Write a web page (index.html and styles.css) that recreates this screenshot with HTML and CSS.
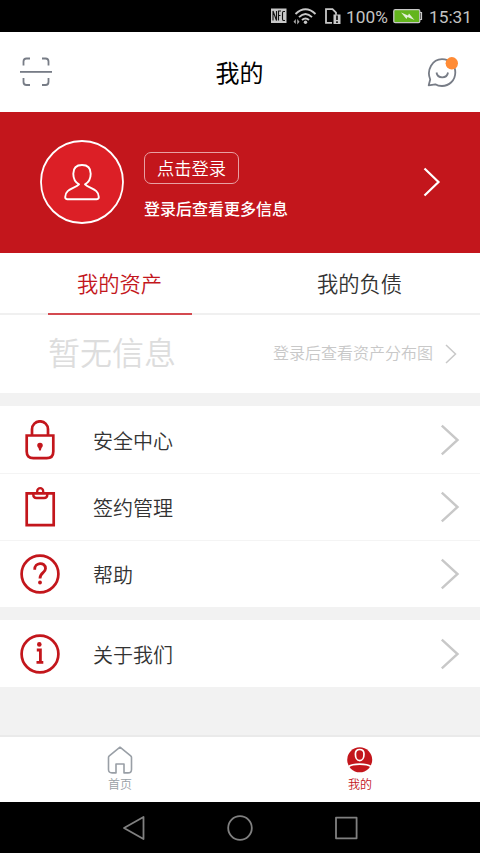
FILE: index.html
```html
<!DOCTYPE html>
<html lang="zh-CN">
<head>
<meta charset="utf-8">
<title>我的</title>
<link rel="stylesheet" href="styles.css">
</head>
<body>
<div class="phone">
  <div class="status">
    <svg class="status-icons" width="75" height="32" viewBox="0 0 75 32">
      <rect x="1" y="8.500" width="15.500" height="14.500" fill="#c8c8c8"/>
      <path d="M3 20.500V11L6.500 20.500V11M8.500 20.500V11h2.500M8.500 15.500h2M15 11.500h-1.500q-1 0-1 1.500v6q0 1.500 1 1.500H15" fill="none" stroke="#111" stroke-width="1.100"/>
      <path d="M25.500 14Q35.500 4.500 45.500 14M29 17.200Q35.500 10.700 42 17.200M32 20Q35.500 16.800 39 20" fill="none" stroke="#c8c8c8" stroke-width="1.900"/>
      <circle cx="35.500" cy="22.300" r="1.700" fill="#c8c8c8"/>
      <path d="M23.500 21.800l2.300-2.800v5zM29.500 21.800l-2.300-2.800v5.500z" fill="#aaa"/>
      <path d="M62 22.800h-6V9.200H62.500l3.500 3.500v2" fill="none" stroke="#c8c8c8" stroke-width="1.800"/>
      <path d="M63.500 14.500H70.500V24H63.500z" fill="#c8c8c8"/>
      <path d="M67 15.500v4.500M67 21.300v1.700" stroke="#111" stroke-width="1.700"/>
    </svg>
    <span class="percent">100%</span>
    <svg class="battery" width="30" height="32" viewBox="0 0 30 32">
      <rect x=".8" y="9.700" width="26" height="13" rx="1.500" fill="#63b51d" stroke="#c8c8c8" stroke-width="1.300"/>
      <path d="M27 12.500h1.500v7H27" fill="none" stroke="#c8c8c8" stroke-width="1.200"/>
      <path d="M8 12.500l7 3 1-2 5.500 6.500-7-3-1 2z" fill="#e4efd8"/>
    </svg>
    <span class="clock">15:31</span>
  </div>

  <header class="header">
    <svg width="32" height="30" viewBox="0 0 32 30" class="scan">
      <path d="M3.500 8.500V4.500Q3.500 1.500 6.500 1.500H10M22 1.500h3.500q3 0 3 3v4M3.500 21v4q0 3 3 3H10M22 28h3.500q3 0 3-3v-4" />
      <path d="M0 14.900h32"/>
    </svg>
    <h1>我的</h1>
    <svg width="32" height="32" viewBox="0 0 32 32" class="chat">
      <path d="M1.700 29.300L3.200 23.500C-.8 14 5.500 3.200 15 3.200C23 3.200 28.300 9.300 28.300 16.500C28.300 24.500 22 30 15 30Q11 30 8.300 28.300Z"/>
      <path d="M9.500 16.500c1 6.500 10.500 6.500 11.500 0"/>
      <circle cx="24.800" cy="7.300" r="6.200"/>
    </svg>
  </header>

  <section class="banner">
    <svg class="avatar" width="84" height="84" viewBox="0 0 84 84">
      <circle cx="42" cy="42" r="41" fill="#dc1f26" stroke="#fff" stroke-width="1.800"/>
      <path d="M39 44.300C34.800 42 33.300 38 33.300 33.700C33.300 28 36.500 25 42 25S50.700 28 50.700 33.700C50.700 38 49.200 42 45 44.300C49 48.800 58.800 48.500 58.800 57Q58.800 59.200 56.600 59.200H27.400Q25.200 59.200 25.200 57C25.200 48.500 35 48.800 39 44.300Z" fill="none" stroke="#fff" stroke-width="1.900" stroke-linejoin="round"/>
    </svg>
    <div class="login">
      <span class="login-button">点击登录</span>
      <span class="login-hint">登录后查看更多信息</span>
    </div>
    <svg class="banner-arrow" width="18" height="30" viewBox="0 0 18 30"><path d="M1.500 1.500L15.500 15 1.500 28.500"/></svg>
  </section>

  <nav class="tabs">
    <div class="tab"><span class="tab-label active">我的资产</span></div>
    <div class="tab"><span class="tab-label">我的负债</span></div>
  </nav>
  <section class="assets">
    <span class="empty">暂无信息</span>
    <span class="chart-hint">登录后查看资产分布图</span>
    <svg class="small-arrow" width="12" height="20" viewBox="0 0 12 20"><path d="M1 1L10.500 10 1 19"/></svg>
  </section>

  <ul class="list">
    <li>
      <svg class="icon" width="40" height="40" viewBox="0 0 40 40">
        <path d="M6.700 15.500H33.300V31.500Q33.300 38.200 26.700 38.200H13.300Q6.700 38.200 6.700 31.500ZM12 15V9.300a8 8 0 0 1 16 0V15" stroke-width="2.700"/>
        <path d="M20 22.700a2.800 2.800 0 0 1 2.800 2.900q0 1.400-1.300 2.300L20.800 30.500h-1.600l-.7-2.600q-1.300-.9-1.300-2.300A2.800 2.800 0 0 1 20 22.700Z" class="solid"/>
      </svg>
      <span>安全中心</span>
      <svg class="arrow" width="20" height="34" viewBox="0 0 20 34"><path d="M1.800 2.700L17.500 17 1.800 31.300"/></svg>
    </li>
    <li>
      <svg class="icon" width="40" height="40" viewBox="0 0 40 40">
        <path d="M6.700 6.300H33.700V38.200H6.700Z" stroke-width="2.700"/>
        <path d="M13.300 6.300V7.800q0 3.200 3.200 3.200h7.600q3.200 0 3.200-3.200V6.300" stroke-width="2.400"/>
        <path d="M17.200 6V4.200a3 3 0 0 1 6 0V6" stroke-width="2.300"/>
      </svg>
      <span>签约管理</span>
      <svg class="arrow" width="20" height="34" viewBox="0 0 20 34"><path d="M1.800 2.700L17.500 17 1.800 31.300"/></svg>
    </li>
    <li>
      <svg class="icon" width="40" height="40" viewBox="0 0 40 40">
        <circle cx="20" cy="20" r="18.400" stroke-width="2.700"/>
        <path d="M14.700 15.800C14.300 7.800 25.500 7.600 25.500 14.500C25.500 19 20 18.500 20 24.500" stroke-width="2.800"/>
        <circle cx="20" cy="28.500" r="1.900" class="solid"/>
      </svg>
      <span>帮助</span>
      <svg class="arrow" width="20" height="34" viewBox="0 0 20 34"><path d="M1.800 2.700L17.500 17 1.800 31.300"/></svg>
    </li>
  </ul>
  <ul class="list about">
    <li>
      <svg class="icon" width="40" height="40" viewBox="0 0 40 40">
        <circle cx="20" cy="20" r="18.400" stroke-width="2.700"/>
        <path d="M16.800 16H20.400V28.300M16.500 28.300H23.300" stroke-width="2.800"/>
        <circle cx="19.300" cy="10.400" r="2.300" class="solid"/>
      </svg>
      <span>关于我们</span>
      <svg class="arrow" width="20" height="34" viewBox="0 0 20 34"><path d="M1.800 2.700L17.500 17 1.800 31.300"/></svg>
    </li>
  </ul>

  <footer class="tabbar">
    <div class="item">
      <svg width="26" height="28" viewBox="0 0 26 28"><path d="M13 1.200L23.700 9.800Q24.500 10.500 24.500 11.500V23.500Q24.500 26.900 21 26.900H17V18H9V26.900H5Q1.500 26.900 1.500 23.500V11.500Q1.500 10.500 2.300 9.800Z" fill="none" stroke="#999fa6" stroke-width="1.600" stroke-linejoin="round"/></svg>
      <span>首页</span>
    </div>
    <div class="item current">
      <svg width="26" height="28" viewBox="0 0 26 28">
        <circle cx="12.700" cy="13.800" r="12.500" fill="#c3161c"/>
        <path d="M12.700 3.500Q17 3.500 17 8C17 11.500 15.500 14.700 12.700 14.700S8.400 11.500 8.400 8Q8.400 3.500 12.700 3.500ZM1.500 20.500C6 17.200 19.500 17.200 24 20.500" fill="none" stroke="#fff" stroke-width="1.700"/>
      </svg>
      <span>我的</span>
    </div>
  </footer>

  <div class="navkeys">
    <svg width="24" height="26" viewBox="0 0 24 26"><path d="M2 13L21.500 2V24Z"/></svg>
    <svg width="26" height="26" viewBox="0 0 26 26"><circle cx="13" cy="13" r="11.800"/></svg>
    <svg width="24" height="26" viewBox="0 0 24 26"><path d="M2 2.700H22.600V23.300H2Z"/></svg>
  </div>
</div>
</body>
</html>
```
FILE: styles.css
```css
* { box-sizing: border-box; }
body {
  margin: 0;
  font-family: "Noto Sans CJK SC", sans-serif;
  font-weight: 350;
  color: #333;
}
svg { display: block; flex: none; }
.phone {
  width: 480px;
  height: 853px;
  display: flex;
  flex-direction: column;
  background: #f2f2f2;
  overflow: hidden;
}
.phone > * { flex: none; }

.status {
  height: 32px;
  display: flex;
  padding-left: 270px;
  background: #000;
  color: #c4c4c4;
  font: 400 17.3px/34px Roboto, sans-serif;
}
.percent { width: 47px; padding-left: 1px; }
.battery { margin-left: 1px; }
.clock { margin-left: 6px; }

.header {
  height: 80px;
  display: flex;
  align-items: center;
  justify-content: space-between;
  padding: 0 21px 0 20px;
  background: #fff;
}
.header h1 {
  margin: 0;
  font-size: 24px;
  font-weight: 400;
  line-height: 36px;
  color: #000;
}
.scan, .chat { fill: none; stroke: #777c86; stroke-width: 1.8; stroke-linejoin: round; }
.chat circle { fill: #ff8b35; stroke: none; }

.banner {
  height: 141px;
  display: flex;
  align-items: center;
  padding: 0 39px 1px 40px;
  background: #c3161c;
  color: #fff;
}
.login { margin-left: 20px; display: flex; flex-direction: column; align-items: flex-start; gap: 12px; padding-top: 8px; }
.login-button {
  width: 95px;
  height: 32px;
  border: 1px solid #e8a0a3;
  border-radius: 7px;
  font-size: 17.3px;
  line-height: 30px;
  text-align: center;
}
.login-hint { font-size: 16px; line-height: 24px; font-weight: 500; }
.banner-arrow { margin-left: auto; fill: none; stroke: #fff; stroke-width: 2.2; }

.tabs {
  height: 62px;
  display: flex;
  background: #fff;
  border-bottom: 2px solid #f0f0f0;
}
.tab { flex: 1; display: flex; justify-content: center; }
.tab-label { width: 144px; height: 62px; padding-right: 1px; font-size: 21.3px; line-height: 59px; text-align: center; }
.tab-label.active { color: #c3161c; border-bottom: 2px solid #d44a50; }

.assets {
  height: 78px;
  display: flex;
  align-items: center;
  padding: 0 23px 0 48px;
  background: #fff;
}
.empty { font-size: 32px; line-height: 48px; color: #ddd; margin-top: -7px; }
.chart-hint { margin-left: auto; font-size: 16px; line-height: 24px; color: #c8c8c8; margin-top: -4px; }
.small-arrow { margin-left: 12px; fill: none; stroke: #c8c8c8; stroke-width: 1.5; }

.list {
  list-style: none;
  margin: 13px 0 0;
  padding: 0;
}
.list li {
  height: 67px;
  display: flex;
  align-items: center;
  padding: 0 20px;
  background: #fff;
  font-size: 20px;
  line-height: 30px;
}
.list li + li { border-top: 1px solid #f4f4f4; }
.list span { margin-left: 33px; padding-top: 1px; }
.list li:first-child span { padding-top: 3px; }
.icon { fill: none; stroke: #c3161c; }
.icon .solid { fill: #c3161c; stroke: none; }
.arrow { margin-left: auto; fill: none; stroke: #c8c8c8; stroke-width: 2.4; }

.tabbar {
  height: 67px;
  margin-top: auto;
  display: flex;
  background: #fff;
  border-top: 2px solid #eaeaea;
}
.item {
  flex: 1;
  display: flex;
  flex-direction: column;
  align-items: center;
  padding-top: 9px;
  font-size: 12px;
  line-height: 20px;
  color: #999fa6;
}
.item.current { color: #c3161c; }

.navkeys {
  height: 51px;
  display: flex;
  align-items: center;
  justify-content: space-between;
  padding: 0 122px;
  background: #000;
}
.navkeys svg { fill: none; stroke: #808080; stroke-width: 1.8; stroke-linejoin: round; }
```
